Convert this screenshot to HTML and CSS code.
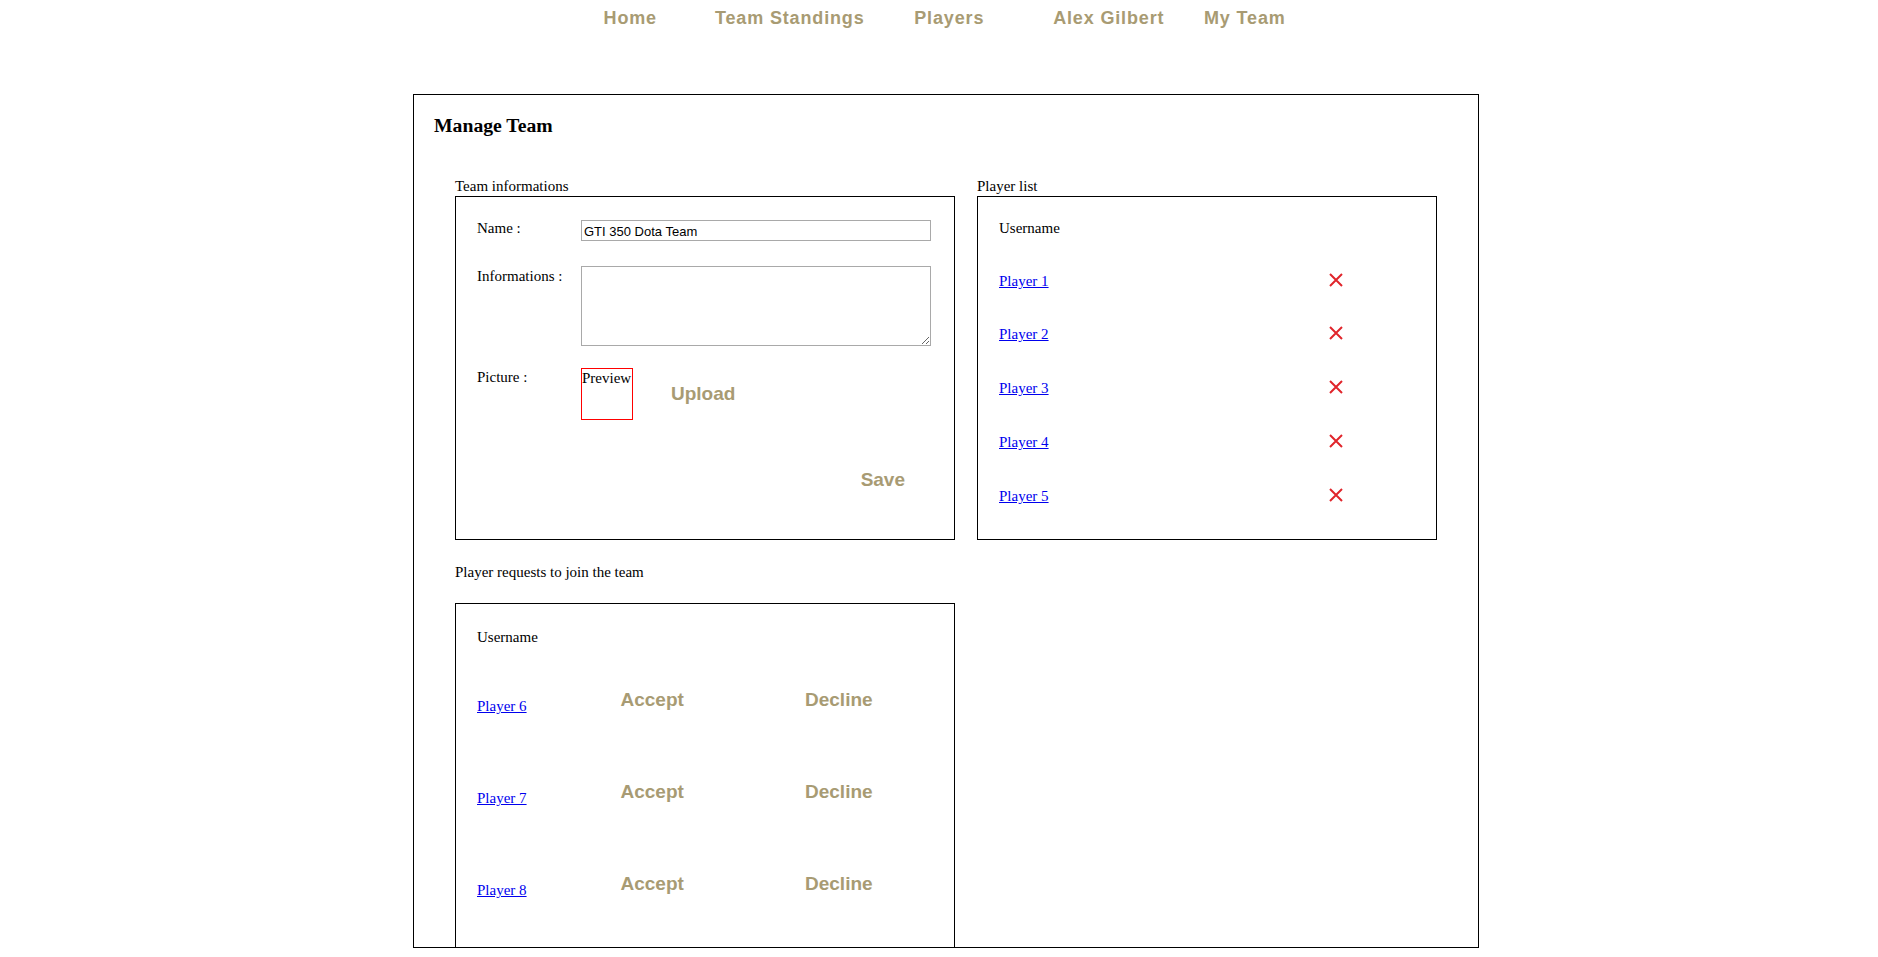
FILE: index.html
```html
<!DOCTYPE html>
<html>
<head>
<meta charset="utf-8">
<title>Manage Team</title>
<link rel="stylesheet" href="styles.css">
</head>
<body>
<ul class="nav">
  <li class="nav-item"><a href="#">Home</a></li>
  <li class="nav-item"><a href="#">Team Standings</a></li>
  <li class="nav-item"><a href="#">Players</a></li>
  <li class="nav-item"><a href="#">Alex Gilbert</a></li>
  <li class="nav-item nav-item-last"><a href="#">My Team</a></li>
</ul>

<div class="panel">
  <h1 class="panel-title">Manage Team</h1>
  <div class="columns">
    <div class="col-left">
      <div class="section-label">Team informations</div>
      <div class="team-box">
        <div class="form-row">
          <div class="form-label label-name">Name :</div>
          <input class="text-input" type="text" value="GTI 350 Dota Team">
        </div>
        <div class="form-row row-info">
          <div class="form-label label-info">Informations :</div>
          <textarea class="text-area"></textarea>
        </div>
        <div class="form-row row-picture">
          <div class="form-label">Picture :</div>
          <div class="picture-field">
            <div class="preview">Preview</div>
            <a class="action" href="#">Upload</a>
          </div>
        </div>
        <div class="save-row">
          <a class="action" href="#">Save</a>
        </div>
      </div>

      <div class="section-label requests-label">Player requests to join the team</div>
      <div class="requests-box">
        <div class="table-head">Username</div>
        <div class="req-row">
          <a class="player-link req-name" href="#">Player 6</a>
          <a class="action" href="#">Accept</a>
          <a class="action" href="#">Decline</a>
        </div>
        <div class="req-row">
          <a class="player-link req-name" href="#">Player 7</a>
          <a class="action" href="#">Accept</a>
          <a class="action" href="#">Decline</a>
        </div>
        <div class="req-row">
          <a class="player-link req-name" href="#">Player 8</a>
          <a class="action" href="#">Accept</a>
          <a class="action" href="#">Decline</a>
        </div>
      </div>
    </div>

    <div class="col-right">
      <div class="section-label">Player list</div>
      <div class="list-box">
        <div class="table-head">Username</div>
        <div class="pl-row">
          <a class="player-link pl-name" href="#">Player 1</a>
          <svg class="remove" width="14" height="14" viewBox="0 0 14 14"><path d="M1 1L13 13M13 1L1 13" stroke="#e0252b" stroke-width="2"/></svg>
        </div>
        <div class="pl-row">
          <a class="player-link pl-name" href="#">Player 2</a>
          <svg class="remove" width="14" height="14" viewBox="0 0 14 14"><path d="M1 1L13 13M13 1L1 13" stroke="#e0252b" stroke-width="2"/></svg>
        </div>
        <div class="pl-row">
          <a class="player-link pl-name" href="#">Player 3</a>
          <svg class="remove" width="14" height="14" viewBox="0 0 14 14"><path d="M1 1L13 13M13 1L1 13" stroke="#e0252b" stroke-width="2"/></svg>
        </div>
        <div class="pl-row">
          <a class="player-link pl-name" href="#">Player 4</a>
          <svg class="remove" width="14" height="14" viewBox="0 0 14 14"><path d="M1 1L13 13M13 1L1 13" stroke="#e0252b" stroke-width="2"/></svg>
        </div>
        <div class="pl-row">
          <a class="player-link pl-name" href="#">Player 5</a>
          <svg class="remove" width="14" height="14" viewBox="0 0 14 14"><path d="M1 1L13 13M13 1L1 13" stroke="#e0252b" stroke-width="2"/></svg>
        </div>
      </div>
    </div>
  </div>
</div>
</body>
</html>
```
FILE: styles.css
```css
html, body {
  margin: 0;
  padding: 0;
  background: #fff;
}

body {
  font-family: "Liberation Serif", "Times New Roman", serif;
  font-size: 15px;
  line-height: 18px;
  color: #000;
}

.nav {
  display: flex;
  list-style: none;
  margin: 0;
  padding: 9px 0 0 550.5px;
  height: 18px;
}

.nav-item {
  width: 159.5px;
  text-align: center;
}

.nav-item-last {
  width: auto;
  text-align: left;
  padding-left: 15.5px;
}

.nav-item a {
  font-family: "Liberation Sans", Arial, sans-serif;
  font-weight: bold;
  font-size: 18px;
  line-height: 18px;
  letter-spacing: 0.85px;
  color: #a89b73;
  text-decoration: none;
}

.panel {
  margin: 67px 0 0 413px;
  width: 1066px;
  height: 854px;
  box-sizing: border-box;
  border: 1px solid #000;
  padding-top: 18.6px;
}

.panel-title {
  margin: 0 0 0 20px;
  font-family: "Liberation Serif", "Times New Roman", serif;
  font-weight: bold;
  font-size: 19.7px;
  line-height: 22px;
}

.columns {
  display: flex;
  gap: 22px;
  margin-top: 41.4px;
  padding-left: 41px;
}

.col-left {
  width: 500px;
}

.col-right {
  width: 460px;
}

.section-label {
  line-height: 18px;
  margin-bottom: 1px;
}

.team-box {
  width: 500px;
  height: 344px;
  box-sizing: border-box;
  border: 1px solid #000;
  padding: 23px 0 0 21px;
}

.form-row {
  display: flex;
  align-items: flex-start;
}

.form-label {
  width: 104px;
  flex: none;
  line-height: 18px;
}

.label-name {
  margin-top: -1px;
}

.label-info {
  margin-top: 1px;
}

.row-info {
  margin-top: 25px;
}

.row-picture {
  margin-top: 22px;
}

.text-input {
  width: 350px;
  height: 21px;
  box-sizing: border-box;
  margin: 0;
  border: 1px solid #a9a9a9;
  padding: 2px 2px 0;
  font-family: "Liberation Sans", Arial, sans-serif;
  font-size: 13px;
  color: #000;
  outline: none;
}

.text-area {
  width: 350px;
  height: 80px;
  box-sizing: border-box;
  margin: 0;
  border: 1px solid #a9a9a9;
  padding: 2px;
  font-family: "Liberation Sans", Arial, sans-serif;
  font-size: 13px;
}

.picture-field {
  display: flex;
  align-items: center;
  gap: 38px;
}

.preview {
  width: 50px;
  height: 50px;
  border: 1px solid #ff0000;
  line-height: 18px;
  overflow: hidden;
  white-space: nowrap;
}

.action {
  font-family: "Liberation Sans", Arial, sans-serif;
  font-weight: bold;
  font-size: 19px;
  line-height: 22px;
  color: #a89b73;
  text-decoration: none;
}

.save-row {
  display: flex;
  justify-content: flex-end;
  padding-right: 49px;
  margin-top: 49.4px;
}

.requests-label {
  margin-top: 23px;
  margin-bottom: 22px;
}

.requests-box {
  width: 500px;
  height: 345px;
  box-sizing: border-box;
  border: 1px solid #000;
  padding: 24px 0 0 21px;
}

.table-head {
  line-height: 18px;
}

.player-link {
  color: #0000ee;
  text-decoration: underline;
  line-height: 18px;
}

.req-row {
  display: grid;
  grid-template-columns: 143.5px 184.5px auto;
  align-items: start;
  margin-top: 65.6px;
}

.table-head + .req-row {
  margin-top: 42.7px;
}

.req-name {
  margin-top: 8.4px;
}

.list-box {
  width: 460px;
  height: 344px;
  box-sizing: border-box;
  border: 1px solid #000;
  padding: 22px 0 0 21px;
}

.pl-row {
  display: flex;
  align-items: flex-start;
  margin-top: 35.75px;
  line-height: 18px;
}

.table-head + .pl-row {
  margin-top: 34.75px;
}

.pl-name {
  width: 330px;
  flex: none;
}

.remove {
  display: block;
  margin-top: 1px;
}
```
